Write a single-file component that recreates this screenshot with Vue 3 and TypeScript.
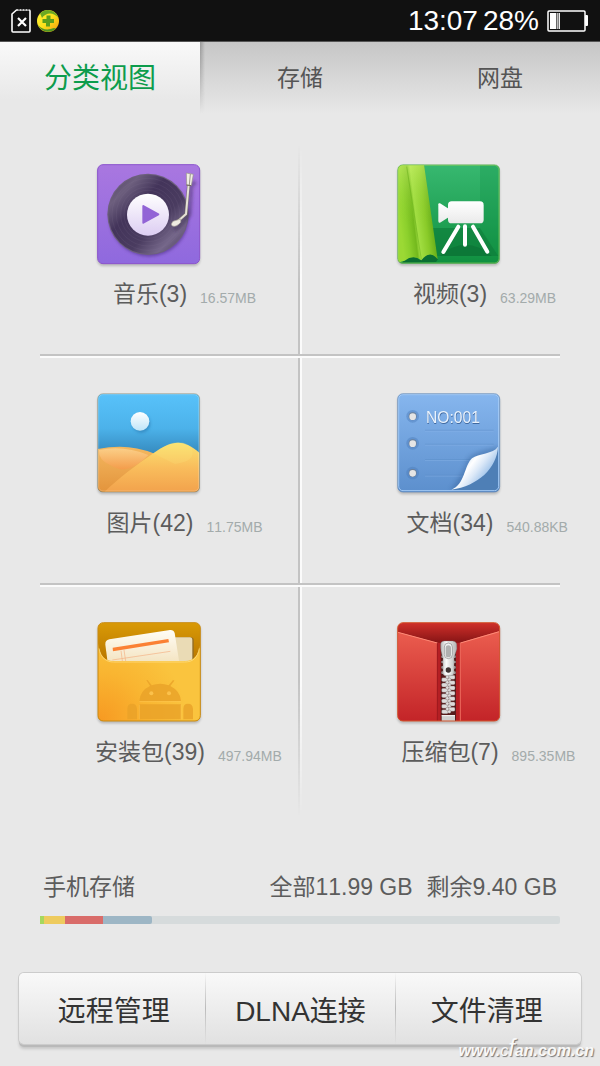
<script setup lang="ts">
import { ref } from 'vue'

type Kind = 'music' | 'video' | 'image' | 'doc' | 'apk' | 'zip'

interface Category {
  kind: Kind
  name: string
  count: number
  size: string
}

interface Segment {
  name: string
  share: number
}

const tabs: string[] = ['分类视图', '存储', '网盘']
const activeTab = ref<number>(0)

const rows: Category[][] = [
  [
    { kind: 'music', name: '音乐', count: 3, size: '16.57MB' },
    { kind: 'video', name: '视频', count: 3, size: '63.29MB' },
  ],
  [
    { kind: 'image', name: '图片', count: 42, size: '11.75MB' },
    { kind: 'doc', name: '文档', count: 34, size: '540.88KB' },
  ],
  [
    { kind: 'apk', name: '安装包', count: 39, size: '497.94MB' },
    { kind: 'zip', name: '压缩包', count: 7, size: '895.35MB' },
  ],
]

const segments: Segment[] = [
  { name: 'green', share: 0.8 },
  { name: 'yellow', share: 4 },
  { name: 'red', share: 7.3 },
  { name: 'blue', share: 9.4 },
]

const actions: string[] = ['远程管理', 'DLNA连接', '文件清理']

const teeth: number[] = [208, 224, 240, 256, 272, 288, 304]
</script>

<template>
  <div class="page">
    <header class="status">
      <svg class="sim" width="20" height="26" viewBox="0 0 20 26" aria-hidden="true">
        <path d="M5.5 2H18a1 1 0 0 1 1 1V23a1 1 0 0 1-1 1H2a1 1 0 0 1-1-1V6Z" fill="none" stroke="#fff" stroke-width="1.6" stroke-linejoin="round" />
        <path d="M8 1v1.500M11 1v1.500M14 1v1.500M17 1v1.500" stroke="#111" stroke-width="1" />
        <path d="M7 10l8 8M15 10l-8 8" stroke="#fff" stroke-width="2.2" />
      </svg>
      <svg width="22" height="22" viewBox="0 0 22 22" aria-hidden="true">
        <defs>
          <linearGradient id="ball" x1="0" y1="0" x2="1" y2="1">
            <stop offset="0" stop-color="#fff33a" />
            <stop offset="0.5" stop-color="#fbe11c" />
            <stop offset="1" stop-color="#f39a0b" />
          </linearGradient>
        </defs>
        <circle cx="11" cy="11" r="11" fill="url(#ball)" />
        <path d="M3 3.5A11 11 0 0 1 21.500 8C17 2 9 2 5 8Q4 5 3 3.500Z" fill="#6aa823" />
        <path d="M1 15Q7 22 17 18L19 18.500A11 11 0 0 1 1 15Z" fill="#4f9424" />
        <path d="M9.500 5.500h4v3.500H17v4h-4v3.500H9V13H5.500V9H9.500Z" fill="#5c9e1c" />
      </svg>
      <span class="time">13:07</span>
      <span class="percent">28%</span>
      <svg width="41" height="22" viewBox="0 0 41 22" aria-hidden="true">
        <rect x="1" y="1" width="37" height="20" rx="1" fill="none" stroke="#fff" stroke-width="1.5" />
        <rect x="38" y="5" width="3" height="11" rx="1" fill="#fff" />
        <rect x="3" y="3" width="6" height="16" fill="#fff" />
        <rect x="9.5" y="3" width="1.5" height="16" fill="#bbb" />
        <rect x="11.5" y="3" width="1.5" height="16" fill="#eee" />
      </svg>
    </header>

    <nav class="tabs">
      <button
        v-for="(tab, i) in tabs"
        :key="tab"
        type="button"
        class="tab"
        :class="{ active: i === activeTab }"
        @click="activeTab = i"
      >{{ tab }}</button>
    </nav>

    <main class="grid">
      <section v-for="(row, r) in rows" :key="r" class="row">
        <button v-for="item in row" :key="item.kind" type="button" class="cell">
          <svg v-if="item.kind === 'music'" class="icon" width="106" height="102" viewBox="51 42 318 306" aria-hidden="true">
            <defs>
              <linearGradient id="mBg" x1="0" y1="0" x2="0" y2="1">
                <stop offset="0" stop-color="#a977e0" />
                <stop offset="1" stop-color="#8f69de" />
              </linearGradient>
              <linearGradient id="mDisc" x1="0" y1="0" x2="1" y2="1">
                <stop offset="0" stop-color="#4a3b5c" />
                <stop offset="0.2" stop-color="#6d5f7e" />
                <stop offset="0.38" stop-color="#43345a" />
                <stop offset="0.62" stop-color="#4a3c60" />
                <stop offset="0.8" stop-color="#75678a" />
                <stop offset="1" stop-color="#3d304f" />
              </linearGradient>
              <linearGradient id="mHub" x1="0" y1="0" x2="0" y2="1">
                <stop offset="0" stop-color="#fff" />
                <stop offset="1" stop-color="#dccdf2" />
              </linearGradient>
              <filter id="mSoft" x="-20%" y="-20%" width="140%" height="140%"><feGaussianBlur stdDeviation="5" /></filter>
            </defs>
            <rect x="53" y="44" width="306" height="297" rx="16" fill="url(#mBg)" stroke="#8a52cc" stroke-width="3" />
            <circle cx="207" cy="200" r="120" fill="#503088" opacity="0.6" filter="url(#mSoft)" />
            <circle cx="204" cy="193" r="122" fill="#6d607c" />
            <circle cx="204" cy="193" r="119" fill="url(#mDisc)" />
            <g fill="none" stroke="#8b7d9e" stroke-opacity="0.2" stroke-width="2">
              <circle cx="204" cy="193" r="108" /><circle cx="204" cy="193" r="95" />
              <circle cx="204" cy="193" r="82" /><circle cx="204" cy="193" r="72" />
            </g>
            <circle cx="204" cy="194" r="63" fill="url(#mHub)" />
            <path d="M190 168 235 193 190 218Z" fill="#9264d6" stroke="#9264d6" stroke-width="6" stroke-linejoin="round" />
            <path d="M346 95 333 108 328 194 296 232 282 238" fill="none" stroke="#34204f" stroke-opacity="0.4" stroke-width="14" filter="url(#mSoft)" />
            <path d="M326 103 318 192 292 215" fill="none" stroke="#77736d" stroke-width="9" />
            <path d="M326 103 318 192 292 215" fill="none" stroke="#e6e2d8" stroke-width="6" />
            <path d="M319 69 340 73 334 107 320 105Z" fill="#f1eee4" stroke="#96928a" stroke-width="2" />
            <path d="M331 72 328 105" stroke="#9c978c" stroke-width="3" />
            <path d="M319 105 334 107" stroke="#6f675d" stroke-width="3" />
            <path d="M302 207 279 214Q270 225 278 228 289 232 302 217Z" fill="#efebe2" stroke="#aaa49a" stroke-width="2" />
          </svg>

          <svg v-else-if="item.kind === 'video'" class="icon" width="106" height="102" viewBox="51 42 318 306" aria-hidden="true">
            <defs>
              <linearGradient id="vBg" x1="0" y1="0" x2="0" y2="1">
                <stop offset="0" stop-color="#37b870" />
                <stop offset="1" stop-color="#109040" />
              </linearGradient>
              <linearGradient id="vCurtain" gradientUnits="userSpaceOnUse" x1="58" y1="200" x2="160" y2="188">
                <stop offset="0" stop-color="#9bd934" />
                <stop offset="0.18" stop-color="#8cd02c" />
                <stop offset="0.4" stop-color="#73b91d" />
                <stop offset="0.48" stop-color="#a3df43" />
                <stop offset="0.75" stop-color="#8acb29" />
                <stop offset="1" stop-color="#62aa18" />
              </linearGradient>
              <linearGradient id="vLight" x1="0" y1="0" x2="0" y2="1">
                <stop offset="0" stop-color="#d8f97a" stop-opacity="0.5" />
                <stop offset="0.6" stop-color="#8bd02c" stop-opacity="0" />
              </linearGradient>
              <linearGradient id="vCam" x1="0" y1="0" x2="0" y2="1">
                <stop offset="0" stop-color="#fff" />
                <stop offset="1" stop-color="#eaeaea" />
              </linearGradient>
              <clipPath id="vClip"><rect x="53" y="44" width="306" height="297" rx="16" /></clipPath>
            </defs>
            <g clip-path="url(#vClip)">
              <rect x="53" y="44" width="306" height="297" fill="url(#vBg)" />
              <path d="M300 44H359V320L300 234Z" fill="#0d8a45" fill-opacity="0.25" />
              <path d="M150 234H300L355 318H150Z" fill="#0b7a38" fill-opacity="0.6" />
              <path d="M180 318Q256 250 335 318Z" fill="#0a6c31" fill-opacity="0.5" />
              <path d="M66 338Q90 305 120 330 150 295 174 328L168 336Z" fill="#0a6e33" />
              <path d="M53 44H132L173 328Q150 298 124 331 100 312 74 332L53 338Z" fill="url(#vCurtain)" />
              <path d="M53 44H132L173 328Q150 298 124 331 100 312 74 332L53 338Z" fill="url(#vLight)" />
              <path d="M80 50 124 328" stroke="#67af1a" stroke-opacity="0.5" stroke-width="3" />
            </g>
            <rect x="55" y="46" width="302" height="293" rx="14" fill="none" stroke="#a8df60" stroke-opacity="0.5" stroke-width="3" />
            <rect x="53" y="44" width="306" height="297" rx="16" fill="none" stroke="#3d9c35" stroke-opacity="0.6" stroke-width="2" />
            <path d="M175 163Q175 158 180 160L206 176V202L180 218Q175 220 175 213Z" fill="url(#vCam)" />
            <rect x="204" y="154" width="107" height="66" rx="11" fill="url(#vCam)" />
            <g stroke="#fff" stroke-width="12" stroke-linecap="round">
              <path d="M235 230 190 306M255 229V284M279 230 322 305" />
            </g>
          </svg>

          <svg v-else-if="item.kind === 'image'" class="icon" width="106" height="102" viewBox="51 39 318 306" aria-hidden="true">
            <defs>
              <linearGradient id="iSky" x1="0" y1="0" x2="0" y2="1">
                <stop offset="0" stop-color="#58c2fa" />
                <stop offset="0.35" stop-color="#4cb2ea" />
                <stop offset="0.62" stop-color="#3589bd" />
              </linearGradient>
              <linearGradient id="iSun" x1="0" y1="0" x2="0" y2="1">
                <stop offset="0" stop-color="#fff" />
                <stop offset="1" stop-color="#bfe5f9" />
              </linearGradient>
              <linearGradient id="iBack" x1="0" y1="0" x2="0" y2="1">
                <stop offset="0" stop-color="#f4b860" />
                <stop offset="1" stop-color="#e3943c" />
              </linearGradient>
              <linearGradient id="iFace" x1="0" y1="0" x2="0" y2="1">
                <stop offset="0" stop-color="#fdd592" />
                <stop offset="1" stop-color="#f69a4a" />
              </linearGradient>
              <linearGradient id="iFront" x1="0" y1="0" x2="0" y2="1">
                <stop offset="0" stop-color="#fbe271" />
                <stop offset="0.5" stop-color="#f9bd5c" />
                <stop offset="1" stop-color="#f2a24c" />
              </linearGradient>
              <filter id="iSoft" x="-40%" y="-40%" width="180%" height="180%"><feGaussianBlur stdDeviation="5" /></filter>
              <clipPath id="iClip"><rect x="53" y="41" width="306" height="295" rx="16" /></clipPath>
            </defs>
            <g clip-path="url(#iClip)">
              <rect x="53" y="41" width="306" height="295" fill="url(#iSky)" />
              <circle cx="184" cy="131" r="27" fill="#206da5" opacity="0.5" filter="url(#iSoft)" />
              <circle cx="180" cy="124" r="28" fill="url(#iSun)" />
              <path d="M53 207Q145 188 220 220L280 260V336H53Z" fill="url(#iBack)" />
              <path d="M57 210Q130 195 205 225 170 262 134 268 115 270 90 255 55 240 57 210Z" fill="url(#iFace)" opacity="0.8" />
              <path d="M73 336C120 292 165 258 220 220 275 180 310 176 359 219V336Z" fill="url(#iFront)" />
              <path d="M220 220C275 180 310 176 335 205 345 235 325 246 285 252Z" fill="#fce983" fill-opacity="0.2" />
            </g>
            <rect x="56" y="44" width="300" height="289" rx="13" fill="none" stroke="#fff" stroke-opacity="0.3" stroke-width="2" />
            <rect x="53" y="41" width="306" height="295" rx="16" fill="none" stroke="#7a7550" stroke-opacity="0.6" stroke-width="2" />
          </svg>

          <svg v-else-if="item.kind === 'doc'" class="icon" width="106" height="102" viewBox="51 39 318 306" aria-hidden="true">
            <defs>
              <linearGradient id="dBg" x1="0" y1="0" x2="0" y2="1">
                <stop offset="0" stop-color="#86b6ee" />
                <stop offset="1" stop-color="#5c8fcd" />
              </linearGradient>
              <linearGradient id="dCurl" gradientUnits="userSpaceOnUse" x1="255" y1="230" x2="320" y2="280">
                <stop offset="0" stop-color="#cbdff4" />
                <stop offset="0.35" stop-color="#fff" />
                <stop offset="0.65" stop-color="#dce9f8" />
                <stop offset="1" stop-color="#a6c7eb" />
              </linearGradient>
              <filter id="dSoft" x="-30%" y="-30%" width="160%" height="160%"><feGaussianBlur stdDeviation="7" /></filter>
              <clipPath id="dClip"><rect x="53" y="41" width="306" height="295" rx="16" /></clipPath>
            </defs>
            <g clip-path="url(#dClip)">
              <rect x="53" y="41" width="306" height="295" fill="url(#dBg)" />
              <g stroke-width="2">
                <path d="M135 151H341M135 193H341M135 239H341M135 286H341" stroke="#5387c5" stroke-opacity="0.8" />
                <path d="M135 153H341M135 195H341M135 241H341M135 288H341" stroke="#9cc4f2" stroke-opacity="0.5" />
              </g>
              <path d="M210 330Q250 280 262 238 275 215 355 200V336Z" fill="#2f598f" opacity="0.35" filter="url(#dSoft)" />
              <path d="M218 328C295 315 335 270 355 200V333H218Z" fill="#4e7fb6" />
            </g>
            <rect x="56" y="44" width="300" height="288" rx="13" fill="none" stroke="#a5cbf6" stroke-width="3" />
            <rect x="53" y="41" width="306" height="295" rx="16" fill="none" stroke="#5d86b8" stroke-width="2" />
            <path d="M214 329C255 315 252 257 276 235 295 220 340 222 354 200 350 265 295 317 214 329Z" fill="url(#dCurl)" />
            <g v-for="y in [109, 190, 279]" :key="y">
              <circle cx="98" :cy="y" r="19" fill="#4c7dbb" fill-opacity="0.45" />
              <circle cx="98" :cy="y" r="12" fill="#6b7f98" />
              <circle cx="98" :cy="y + 1" r="10" fill="#e5e5e5" />
            </g>
            <text x="139" y="133" class="docText docShade">NO:001</text>
            <text x="138" y="130" class="docText">NO:001</text>
          </svg>

          <svg v-else-if="item.kind === 'apk'" class="icon" width="106" height="102" viewBox="51 36 318 306" aria-hidden="true">
            <defs>
              <linearGradient id="aBack" x1="0" y1="0" x2="0" y2="1">
                <stop offset="0" stop-color="#d99a06" />
                <stop offset="0.4" stop-color="#b87500" />
              </linearGradient>
              <radialGradient id="aFront" gradientUnits="userSpaceOnUse" cx="60" cy="330" r="260">
                <stop offset="0" stop-color="#f79a22" />
                <stop offset="0.55" stop-color="#f9b531" />
                <stop offset="1" stop-color="#fac43e" />
              </radialGradient>
              <linearGradient id="aPaper" x1="0" y1="0" x2="0" y2="1">
                <stop offset="0" stop-color="#fffdf6" />
                <stop offset="1" stop-color="#f3e2bd" />
              </linearGradient>
              <clipPath id="aClip"><rect x="54" y="38" width="307" height="295" rx="16" /></clipPath>
            </defs>
            <g clip-path="url(#aClip)">
              <rect x="54" y="38" width="307" height="295" fill="url(#aBack)" />
              <path d="M282 82H332Q341 82 341 90V160H282Z" fill="#8f6b28" />
              <path d="M270 82H330Q337 82 337 90V160H270Z" fill="#eadbb5" />
              <path d="M84 165 76 104Q75 91 88 88L270 60Q281 59 284 69L299 165Z" fill="url(#aPaper)" />
              <path d="M98 113 265 87 267 97 99 124Z" fill="#fb8134" />
              <path d="M97 150 271 124M123 122 128 160M132 120 138 160" stroke="#f5b183" stroke-width="2" fill="none" />
              <path d="M54 100C58 138 75 153 100 153H315C340 153 357 138 361 100V333H54Z" fill="url(#aFront)" />
              <path d="M57 115C63 145 79 156 101 156H314C339 156 352 144 358 115" fill="none" stroke="#ffe18b" stroke-opacity="0.7" stroke-width="3" />
              <g fill="#e8a128" fill-opacity="0.8">
                <path d="M178 273Q180 242 210 228L199 211 203 210 215 226Q241 216 266 226L279 210 283 212 271 228Q302 244 303 273Z" />
                <path d="M178 283H303V328H178Z" />
                <path d="M142 328V297Q142 281 156 281T171 297V328ZM310 328V297Q310 281 324 281T339 297V328Z" />
              </g>
              <path d="M178 275H303M178 284V328M303 284V328" stroke="#ffc959" stroke-width="2" stroke-opacity="0.7" />
              <circle cx="214" cy="250" r="6" fill="#fbc14b" />
              <circle cx="267" cy="250" r="6" fill="#fbc14b" />
            </g>
            <rect x="54" y="38" width="307" height="295" rx="16" fill="none" stroke="#c98a10" stroke-width="3" />
          </svg>

          <svg v-else class="icon" width="106" height="102" viewBox="51 36 318 306" aria-hidden="true">
            <defs>
              <linearGradient id="zTop" gradientUnits="userSpaceOnUse" x1="0" y1="38" x2="0" y2="105">
                <stop offset="0" stop-color="#d0302a" />
                <stop offset="1" stop-color="#7e1113" />
              </linearGradient>
              <linearGradient id="zFlap" gradientUnits="userSpaceOnUse" x1="0" y1="70" x2="0" y2="333">
                <stop offset="0" stop-color="#ea5c4e" />
                <stop offset="1" stop-color="#c32428" />
              </linearGradient>
              <linearGradient id="zMetal" x1="0" y1="0" x2="1" y2="0">
                <stop offset="0" stop-color="#b8b8b8" />
                <stop offset="0.35" stop-color="#fafafa" />
                <stop offset="1" stop-color="#b0b0b0" />
              </linearGradient>
              <clipPath id="zClip"><rect x="53" y="38" width="306" height="295" rx="16" /></clipPath>
            </defs>
            <g clip-path="url(#zClip)">
              <rect x="53" y="38" width="306" height="295" fill="url(#zTop)" />
              <path d="M53 66 172 98 181 100H230L241 98 359 63V333H53Z" fill="url(#zFlap)" />
              <path d="M171 98H183V333H171ZM228 98H241V333H228Z" fill="#b51f24" />
              <path d="M182 98H228V333H182Z" fill="#571b1c" />
              <path d="M54 67 172 99M241 99 358 65" stroke="#ff8b78" stroke-width="3" fill="none" />
              <path d="M241 99V333" stroke="#ee6b5e" stroke-width="3" />
              <path d="M172 99V333" stroke="#911519" stroke-width="2" />
              <g v-for="y in [136, 152, 168, 184]" :key="y" fill="#a7a0a0">
                <rect x="184" :y="y" width="9" height="8" rx="3" />
                <rect x="219" :y="y" width="8" height="8" rx="3" />
              </g>
              <g v-for="y in teeth" :key="y" fill="#dedcdc" stroke="#6d5858" stroke-width="1">
                <rect x="185" :y="y - 5" width="20" height="12" rx="4" />
                <rect x="205" :y="y - 12" width="20" height="12" rx="4" />
                <circle cx="202" :cy="y - 7" r="5" />
                <circle cx="208" :cy="y + 1" r="5" />
              </g>
              <rect x="185" y="316" width="40" height="17" fill="#cecece" />
              <path d="M185 317H225" stroke="#fff" stroke-width="3" />
            </g>
            <rect x="53" y="38" width="306" height="295" rx="16" fill="none" stroke="#d4552c" stroke-width="3" />
            <path d="M182 101Q184 93 193 93H218Q227 93 230 101 233 115 226 131L222 142V188Q221 197 213 197H197Q189 197 189 188V143Q181 125 182 101Z" fill="url(#zMetal)" stroke="#777" stroke-width="1" />
            <rect x="193" y="99" width="24" height="47" rx="12" fill="#f1f1f1" stroke="#888" stroke-width="2" />
            <rect x="197" y="106" width="16" height="36" rx="8" fill="#b0b0b0" />
            <circle cx="205" cy="180" r="8" fill="#3e3434" />
            <path d="M196 188Q205 196 214 188" stroke="#fff" stroke-width="2" fill="none" />
          </svg>
          <span class="caption">
            <span class="name">{{ item.name }}({{ item.count }})</span>
            <span class="size">{{ item.size }}</span>
          </span>
        </button>
      </section>
    </main>

    <section class="storage">
      <div class="storageText">
        <span>手机存储</span>
        <span class="totals"><span>全部11.99 GB</span><span>剩余9.40 GB</span></span>
      </div>
      <div class="bar" role="img" aria-label="手机存储">
        <span
          v-for="s in segments"
          :key="s.name"
          class="segment"
          :class="s.name"
          :style="{ width: s.share + '%' }"
        ></span>
      </div>
    </section>

    <footer class="actions">
      <button v-for="a in actions" :key="a" type="button" class="action">{{ a }}</button>
    </footer>

    <div class="mark">www.<span class="markThin">c</span><span class="markTall">f</span>an.com.cn</div>
  </div>
</template>

<style>
body {
  background: #e8e8e8;
}
</style>

<style scoped>
.page {
  position: relative;
  min-height: 100vh;
  box-sizing: border-box;
  padding-bottom: 19px;
  background: #e8e8e8;
  color: #5c5c5c;
  font-family: "Liberation Sans", "Noto Sans CJK SC", sans-serif;
  font-size: 23px;
  font-kerning: none;
}

button {
  margin: 0;
  padding: 0;
  border: 0;
  background: none;
  color: inherit;
  font: inherit;
  font-kerning: none;
  cursor: pointer;
}

.status {
  display: flex;
  align-items: center;
  box-sizing: border-box;
  height: 42px;
  padding: 0 12px 0 11px;
  border-bottom: 1px solid #555;
  background: #111;
  color: #fff;
  font-size: 28px;
}

.sim {
  margin-right: 6px;
}

.time {
  margin-left: auto;
}

.percent {
  margin: 0 8px 0 5px;
}

.tabs {
  display: grid;
  grid-template-columns: repeat(3, 1fr);
  height: 72px;
  background: linear-gradient(#c6c6c6, #e8e8e8);
}

.tab {
  position: relative;
  padding-bottom: 4px;
  color: #555;
}

.tab.active {
  background: linear-gradient(#f9f9f9, #e8e8e8 80%);
  color: #0d9c4c;
  font-size: 28px;
}

.tab.active::after {
  content: "";
  position: absolute;
  top: 0;
  bottom: 0;
  left: 100%;
  width: 5px;
  background: linear-gradient(to right, #999, transparent);
  mask-image: linear-gradient(#000, transparent);
}

.grid {
  position: relative;
  margin-top: 15px;
}

.grid::before {
  content: "";
  position: absolute;
  top: 16px;
  bottom: 0;
  left: 50%;
  width: 4px;
  margin-left: -2px;
  background: linear-gradient(to right, #c3c3c3 50%, #fbfbfb 50%);
  mask-image: linear-gradient(transparent, #000 20%, #000 80%, transparent);
}

.row {
  position: relative;
  display: grid;
  grid-template-columns: 1fr 1fr;
  height: 229px;
}

.row:not(:last-child)::after {
  content: "";
  position: absolute;
  right: 40px;
  bottom: 0;
  left: 40px;
  height: 4px;
  background: linear-gradient(#c3c3c3 50%, #fbfbfb 50%);
}

.cell {
  display: flex;
  flex-direction: column;
  align-items: center;
  padding-top: 35px;
}

.icon {
  display: block;
  filter: drop-shadow(0 2px 1px rgba(0, 0, 0, 0.2));
}

.docText {
  fill: #e9f2fc;
  font-size: 47px;
}

.docShade {
  fill: #40699f;
}

.caption {
  display: grid;
  grid-template-columns: 1fr auto 1fr;
  align-items: center;
  width: 100%;
  margin-top: 11px;
  line-height: 34px;
}

.name {
  grid-column: 2;
}

.size {
  padding: 8px 0 0 13px;
  color: #a3abab;
  font-size: 14px;
  line-height: 26px;
  text-align: left;
}

.storage {
  padding: 54px 40px 0;
}

.storageText {
  display: flex;
  justify-content: space-between;
  padding: 0 3px;
  line-height: 34px;
}

.totals {
  display: flex;
  gap: 14px;
}

.bar {
  display: flex;
  height: 8px;
  margin-top: 12px;
  overflow: hidden;
  border-radius: 0 2px 2px 0;
  background: #d6dbdc;
}

.green {
  background: #a5d85e;
}

.yellow {
  background: #eecb5e;
}

.red {
  background: #d96c69;
}

.blue {
  border-radius: 0 2px 2px 0;
  background: #9db6c5;
}

.actions {
  display: grid;
  grid-template-columns: 34fr 35fr 34fr;
  height: 71px;
  margin: 49px 19px 0;
  border-radius: 5px;
  background: linear-gradient(#f9f9f9, #e1e1e1);
  box-shadow: 0 0 0 1px #ccc, 0 3px 0 #b9b9b9, 0 5px 3px rgba(0, 0, 0, 0.15);
  color: #333;
  font-size: 28px;
}

.action:first-child {
  padding-left: 4px;
}

.action:last-child {
  padding-right: 4px;
}

.action + .action {
  border-left: 1px solid;
  border-image: linear-gradient(transparent, #bbb 50%, transparent) 1;
}

.mark {
  position: absolute;
  right: 6px;
  bottom: 2px;
  color: #f8f8f8;
  font-size: 16px;
  font-style: italic;
  font-weight: bold;
  line-height: 26px;
  text-shadow: 1px 1px 1px #777;
}

.markThin,
.markTall {
  font-weight: normal;
}

.markTall {
  font-size: 24px;
}
</style>
